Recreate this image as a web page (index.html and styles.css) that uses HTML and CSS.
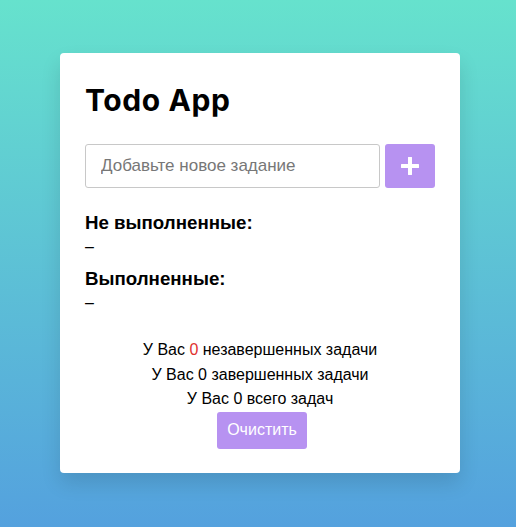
FILE: index.html
```html
<!DOCTYPE html>
<html lang="ru">
<head>
<meta charset="utf-8">
<title>Todo App</title>
<link rel="stylesheet" href="styles.css">
</head>
<body>
<div class="card">
  <h1 class="title">Todo App</h1>
  <div class="add-row">
    <input class="add-input" type="text" placeholder="Добавьте новое задание">
    <button class="add-btn" aria-label="Добавить">
      <svg width="18" height="18" viewBox="0 0 18 18"><path d="M9 1v16M1 9h16" stroke="#fff" stroke-width="4" stroke-linecap="round"/></svg>
    </button>
  </div>
  <h3 class="section">Не выполненные:</h3>
  <div class="empty">–</div>
  <h3 class="section">Выполненные:</h3>
  <div class="empty">–</div>
  <div class="stats">
    <p>У Вас <span class="red">0</span> незавершенных задачи</p>
    <p>У Вас 0 завершенных задачи</p>
    <p>У Вас 0 всего задач</p>
    <button class="clear-btn">Очистить</button>
  </div>
</div>
</body>
</html>
```
FILE: styles.css
```css
html, body {
  margin: 0;
  padding: 0;
}
body {
  min-height: 100vh;
  background: linear-gradient(180deg, #66e2cd 0%, #54a1de 100%);
  font-family: "Liberation Sans", Arial, sans-serif;
  color: #000;
  padding: 53px 0 0 4px;
  box-sizing: border-box;
}
.card {
  width: 400px;
  box-sizing: border-box;
  margin: 0 auto;
  background: #fff;
  border-radius: 4px;
  padding: 27px 25px 24px;
  box-shadow: 0 10px 20px rgba(0, 0, 0, 0.12);
}
.title {
  margin: 0;
  font-family: Inter, "Open Sans", sans-serif;
  font-weight: 700;
  font-size: 30px;
  line-height: 40px;
  letter-spacing: 0.6px;
}
.add-row {
  display: flex;
  gap: 5px;
  margin-top: 24px;
  height: 44px;
}
.add-input {
  flex: 1;
  min-width: 0;
  box-sizing: border-box;
  border: 1px solid #c8c8c8;
  border-radius: 3px;
  padding: 0 15px;
  font-family: "Liberation Sans", Arial, sans-serif;
  font-size: 17px;
  color: #333;
  outline: none;
}
.add-input::placeholder {
  color: #777;
}
.add-btn {
  width: 50px;
  border: none;
  border-radius: 3px;
  background: #b792f1;
  display: flex;
  align-items: center;
  justify-content: center;
  padding: 0;
}
.section {
  margin: 24px 0 0;
  font-size: 18.72px;
  line-height: 22px;
  font-weight: 700;
}
.section + .empty + .section {
  margin-top: 10px;
}
.empty {
  font-size: 16px;
  line-height: 22px;
  margin-top: 2px;
}
.stats {
  margin-top: 24px;
  text-align: center;
  font-size: 16px;
}
.stats p {
  margin: 0;
  line-height: 24.5px;
}
.red {
  color: #e0302e;
}
.clear-btn {
  display: block;
  margin: 0 0 0 calc(50% - 43px);
  width: 90px;
  height: 37px;
  border: none;
  border-radius: 3px;
  background: #b792f1;
  color: #fff;
  font-family: "Liberation Sans", Arial, sans-serif;
  font-size: 16px;
  padding: 0;
}
```
